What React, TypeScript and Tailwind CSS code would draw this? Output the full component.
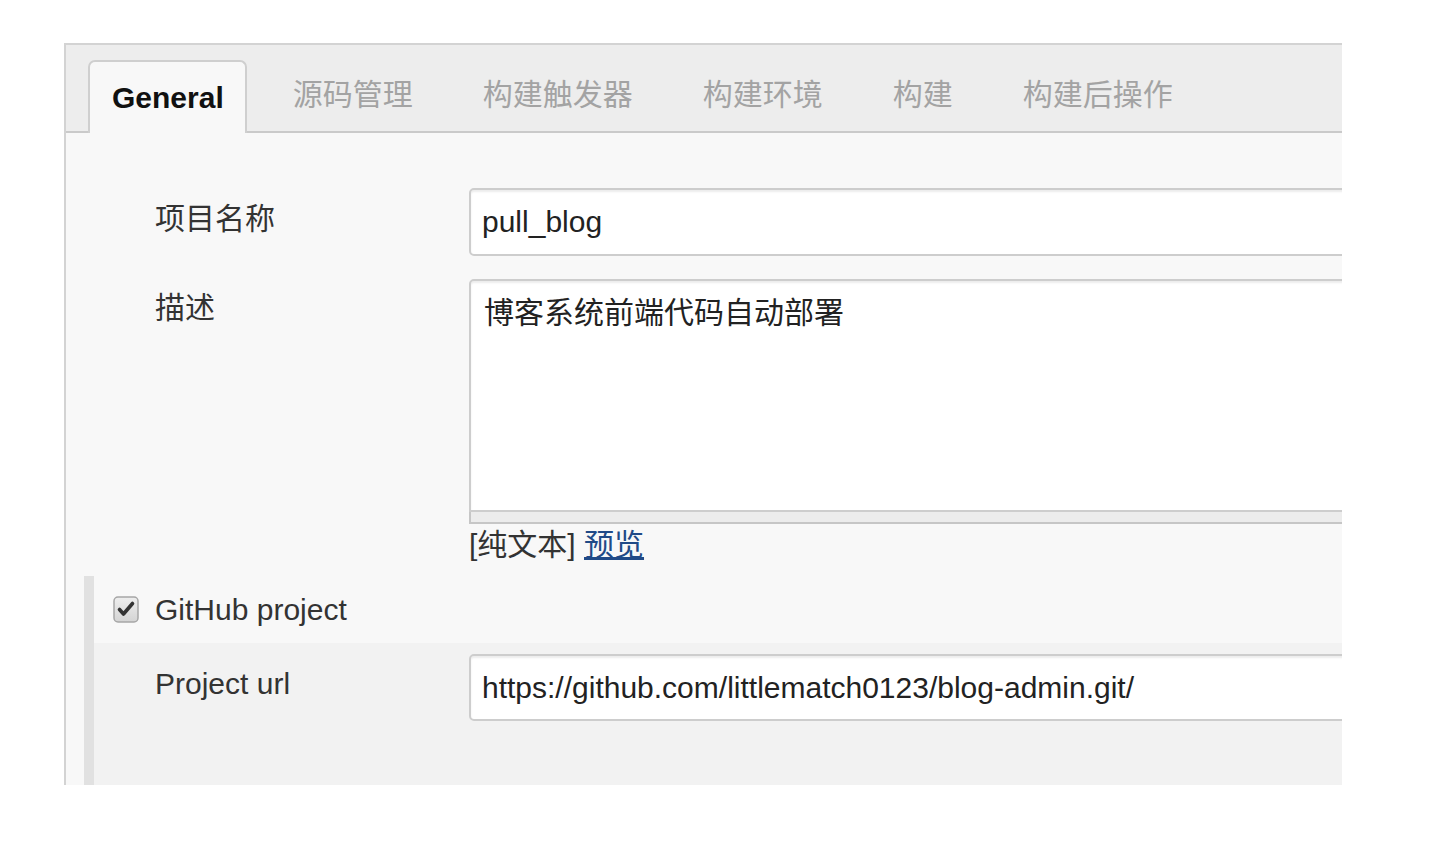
import React from 'react';

const tabs = ['源码管理', '构建触发器', '构建环境', '构建', '构建后操作'];

const CheckBox: React.FC = () => (
  <svg width="26" height="27" viewBox="0 0 26 27">
    <defs>
      <linearGradient id="cb" x1="0" y1="0" x2="0" y2="1">
        <stop offset="0" stopColor="#eeeeee" />
        <stop offset="1" stopColor="#d4d4d4" />
      </linearGradient>
    </defs>
    <rect x="1" y="1" width="24" height="25" rx="4" fill="url(#cb)" stroke="#a6a6a6" strokeWidth="1.5" />
    <path d="M6.5 13.5 L10.5 18 L19.5 7.5" fill="none" stroke="#333" strokeWidth="3.6" strokeLinecap="round" strokeLinejoin="round" />
  </svg>
);

export default function App() {
  return (
    <div className="h-[852px] w-[1446px] bg-white pt-[43px] pl-[64px] font-['Liberation_Sans','Noto_Sans_CJK_SC',sans-serif] text-[30px] leading-[36px]">
      <div className="w-[1278px] h-[742px] overflow-hidden border-t-2 border-l-2 border-[#d3d3d3] bg-[#f8f8f8]">
        {/* Tabs */}
        <div className="h-[88px] bg-[#ededed] border-b-2 border-[#cacaca] flex items-end pl-[22px]">
          <div className="relative -mb-[2px] h-[73px] pl-[22px] pr-[21px] flex items-center bg-[#f8f8f8] border-2 border-b-0 border-[#cfcfcf] rounded-t-[7px] font-bold text-[#111]">
            General
          </div>
          {tabs.map((t, i) => (
            <div
              key={t}
              className={`h-[72px] px-[35px] flex items-center text-[#a3a3a3] ${i === 0 ? 'ml-[11px]' : ''}`}
            >
              {t}
            </div>
          ))}
        </div>

        {/* Form */}
        <div className="pt-[55px] text-[#333]">
          <div className="flex">
            <div className="w-[403px] shrink-0 pl-[89px] pt-[13px]">项目名称</div>
            <div className="w-[900px] shrink-0 h-[68px] border-2 border-[#cdcdcd] rounded-[5px] bg-white shadow-[inset_0_2px_2px_rgba(0,0,0,0.08)] flex items-center pl-[11px] text-[#222]">
              pull_blog
            </div>
          </div>

          <div className="flex mt-[23px]">
            <div className="w-[403px] shrink-0 pl-[89px] pt-[11px]">描述</div>
            <div className="w-[900px] shrink-0">
              <div className="h-[233px] border-2 border-[#cdcdcd] rounded-t-[5px] bg-white shadow-[inset_0_2px_2px_rgba(0,0,0,0.08)] pt-[14px] pl-[13px] text-[#222]">
                博客系统前端代码自动部署
              </div>
              <div className="h-[12px] bg-[#ececec] border-l-2 border-b-2 border-[#c6c6c6]" />
              <div className="mt-[3px]">
                [纯文本]{' '}
                <a href="#" className="text-[#204a87] underline underline-offset-2">预览</a>
              </div>
            </div>
          </div>

          {/* GitHub project */}
          <div className="mt-[13px] ml-[18px] border-l-[10px] border-[#e1e1e1]">
            <div className="h-[67px] flex items-center pl-[19px]">
              <CheckBox />
              <span className="ml-[16px]">GitHub project</span>
            </div>
            <div className="bg-[#f2f2f2] pt-[11px] h-[200px] flex">
              <div className="w-[375px] shrink-0 pl-[61px] pt-[12px]">Project url</div>
              <div className="w-[900px] shrink-0 h-[67px] border-2 border-[#cdcdcd] rounded-[5px] bg-white shadow-[inset_0_2px_2px_rgba(0,0,0,0.08)] flex items-center pl-[11px] text-[#222]">
                https://github.com/littlematch0123/blog-admin.git/
              </div>
            </div>
          </div>
        </div>
      </div>
    </div>
  );
}
